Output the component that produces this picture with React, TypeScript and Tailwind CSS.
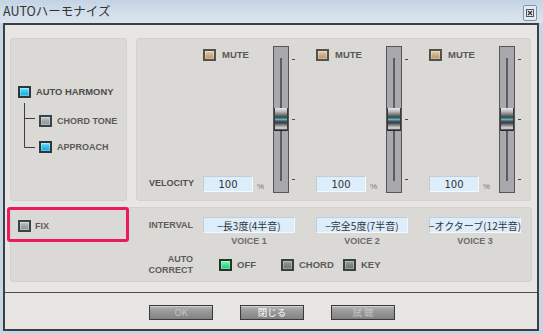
import React from 'react';

type Tone = 'cyan' | 'gray' | 'tan' | 'green' | 'dark';

const toneClass: Record<Tone, string> = {
  cyan: 'border-[#2e363c] bg-[linear-gradient(180deg,#7fe6ff_0%,#32c3ee_45%,#1aa8dc_100%)]',
  gray: 'border-[#3c4246] bg-[linear-gradient(180deg,#c4ccd0_0%,#9aa5aa_50%,#8e989d_100%)]',
  tan: 'border-[#55504a] bg-[linear-gradient(180deg,#e6cfae_0%,#c9aa86_55%,#b89872_100%)]',
  green: 'border-[#23352b] bg-[linear-gradient(180deg,#8cf5c0_0%,#3ee38f_50%,#22c877_100%)]',
  dark: 'border-[#3a403c] bg-[linear-gradient(180deg,#99a29d_0%,#7b8680_55%,#6c7670_100%)]',
};

const Check = ({ tone }: { tone: Tone }) => (
  <span
    className={`inline-block shrink-0 w-[13px] h-[12px] border-2 ${toneClass[tone]} shadow-[inset_0_0_0_1px_rgba(255,255,255,0.3)]`}
  />
);

const Slider = () => (
  <div className="flex items-start">
    <div className="relative w-[16px] h-[147px] border border-[#55555a] bg-[#a9a8ac]">
      <div className="absolute left-[6px] top-[11px] w-[2px] h-[123px] bg-[#5c5c61]" />
      {/* thumb sits on top of the track */}
      <div className="absolute left-0 right-0 top-[61px] h-[23px] border-x border-[#3a3a3a] bg-[linear-gradient(180deg,#e8e8e8_0%,#bdbdbd_15%,#7a7c7e_28%,#3d4446_40%,#52b9c2_50%,#5d5166_57%,#3b3d3f_64%,#8e8e8e_76%,#dedede_88%,#262626_96%)]" />
    </div>
    <div className="ml-[3px] flex flex-col gap-[59px] pt-[13px]">
      <span className="block w-[3px] h-[1px] bg-[#4a4a4a]" />
      <span className="block w-[3px] h-[1px] bg-[#4a4a4a]" />
      <span className="block w-[3px] h-[1px] bg-[#4a4a4a]" />
    </div>
  </div>
);

const VoiceColumn = () => (
  <div className="flex h-full">
    <div className="w-[70px] flex flex-col justify-between">
      <div className="flex items-center gap-[6px] mt-[3px]">
        <Check tone="tan" />
        <span className="text-[9.5px] font-bold text-[#585858] leading-none">MUTE</span>
      </div>
      <div className="flex items-end mb-[1px]">
        <div className="w-[50px] h-[16px] bg-[#dcedfb] border border-[#f4f8fc] border-t-[#c4ccd4] border-l-[#c4ccd4] flex items-center justify-center font-['DejaVu_Sans',sans-serif] text-[10px] text-[#333]">
          100
        </div>
        <span className="ml-[4px] text-[8px] text-[#777] leading-none mb-[1px]">%</span>
      </div>
    </div>
    <Slider />
  </div>
);

const intervals = ['−長3度(4半音)', '−完全5度(7半音)', '−オクターブ(12半音)'];

export default function App() {
  return (
    <div className="w-[543px] h-[334px] bg-[#c8d5e2] font-['Liberation_Sans',Arial,sans-serif] overflow-hidden">
      {/* title bar */}
      <div className="h-[23px] flex items-center justify-between pl-[3px] pr-[6px] bg-[linear-gradient(180deg,#c4d4e5_0%,#d3dfeb_60%,#dbe4ee_100%)]">
        <span className="font-['Noto_Sans_CJK_JP',sans-serif] text-[12.5px] text-[#333] leading-none">AUTOハーモナイズ</span>
        <div className="mt-[3px] w-[14px] h-[16px] rounded-[2px] border border-[#8393a6] bg-[#e4ebf3] flex items-center justify-center">
          <svg width="8" height="8" viewBox="0 0 8 8">
            <rect x="0.5" y="0.5" width="7" height="7" fill="none" stroke="#555" />
            <path d="M2 2L6 6M6 2L2 6" stroke="#333" strokeWidth="1.2" />
          </svg>
        </div>
      </div>

      {/* client area */}
      <div className="ml-[3px] w-[536px] h-[308px] border-2 border-[#3b4047] bg-[#e7e6e2]">
        <div className="h-[268px] border-b border-[#4d4d4d] px-[5px] pt-[13px]">
          <div className="flex gap-[9px]">
            {/* harmony mode panel */}
            <div className="w-[117px] h-[163px] rounded-[4px] bg-[#dad9d5] shadow-[inset_0_0_0_1px_#d2d1cd] pt-[48px] pl-[8px]">
              <div className="flex items-center gap-[5px] h-[12px]">
                <Check tone="cyan" />
                <span className="text-[9.4px] font-bold text-[#4c4c4c] leading-none">AUTO HARMONY</span>
              </div>
              <div className="flex mt-[5px]">
                <svg width="21" height="46" className="shrink-0">
                  <path d="M6.5 0V44.5H17M6.5 15.5H17" fill="none" stroke="#3d3d3d" />
                </svg>
                <div className="flex flex-col gap-[14px] pt-[12px]">
                  <div className="flex items-center gap-[5px] h-[12px]">
                    <Check tone="gray" />
                    <span className="text-[9px] font-bold text-[#5a5a5a] leading-none">CHORD TONE</span>
                  </div>
                  <div className="flex items-center gap-[5px] h-[12px]">
                    <Check tone="cyan" />
                    <span className="text-[9px] font-bold text-[#5a5a5a] leading-none">APPROACH</span>
                  </div>
                </div>
              </div>
            </div>

            {/* voices panel */}
            <div className="w-[395px] h-[163px] rounded-[4px] bg-[#dad9d5] shadow-[inset_0_0_0_1px_#d2d1cd] flex pt-[8px] pb-[8px]">
              <div className="w-[67px] flex flex-col justify-end pl-[13px]">
                <div className="h-[16px] mb-[1px] flex items-center text-[9px] font-bold text-[#505050]">VELOCITY</div>
              </div>
              <div className="flex gap-[21px]">
                <VoiceColumn />
                <VoiceColumn />
                <VoiceColumn />
              </div>
            </div>
          </div>

          {/* interval panel */}
          <div className="relative mt-[6px] h-[75px] rounded-[4px] bg-[#dad9d5] shadow-[inset_0_0_0_1px_#d2d1cd] pt-[10px]">
            <div className="flex items-center h-[16px]">
              <div className="w-[183px] flex items-center justify-between pl-[8px]">
                <div className="flex items-center gap-[4px] mt-[2px]">
                  <Check tone="gray" />
                  <span className="text-[9px] font-bold text-[#5a5a5a] leading-none">FIX</span>
                </div>
                <span className="text-[9px] font-bold text-[#5e5e5e] leading-none">INTERVAL</span>
              </div>
              <div className="ml-[10px] flex gap-[21px]">
                {intervals.map((t) => (
                  <div
                    key={t}
                    className="w-[92px] h-[16px] bg-[#dcedfb] border border-[#f4f8fc] border-t-[#c4ccd4] border-l-[#c4ccd4] flex items-center justify-center font-['Noto_Sans_CJK_JP',sans-serif] text-[10px] text-[#333] whitespace-nowrap"
                  >
                    {t}
                  </div>
                ))}
              </div>
            </div>
            <div className="flex ml-[193px] gap-[21px] mt-[2px] h-[12px] items-center">
              {['VOICE 1', 'VOICE 2', 'VOICE 3'].map((v) => (
                <span key={v} className="w-[92px] text-center text-[9px] font-bold text-[#6c6c6c] leading-none">
                  {v}
                </span>
              ))}
            </div>
            <div className="flex items-center h-[24px] mt-[6px]">
              <div className="w-[183px] text-right text-[9px] font-bold text-[#5c5c5c] leading-[11px]">
                AUTO
                <br />
                CORRECT
              </div>
              <div className="ml-[26px] flex">
                <div className="w-[62px] flex items-center gap-[5px]">
                  <Check tone="green" />
                  <span className="text-[9.5px] font-bold text-[#5a5a5a] leading-none">OFF</span>
                </div>
                <div className="w-[62px] flex items-center gap-[5px]">
                  <Check tone="dark" />
                  <span className="text-[9.5px] font-bold text-[#5a5a5a] leading-none">CHORD</span>
                </div>
                <div className="w-[62px] flex items-center gap-[5px]">
                  <Check tone="dark" />
                  <span className="text-[9.5px] font-bold text-[#5a5a5a] leading-none">KEY</span>
                </div>
              </div>
            </div>
            {/* highlight annotation over FIX */}
            <div className="absolute left-[-3px] top-0 w-[122px] h-[35px] border-[3px] border-[#eb1a5c] rounded-[3px]" />
          </div>
        </div>

        {/* buttons */}
        <div className="flex justify-center gap-[27px] pt-[12px] pl-[2px]">
          {[
            { t: 'OK', c: 'text-[#c6c6c6]' },
            { t: '閉じる', c: 'text-white' },
            { t: '試 聴', c: 'text-[#c6c6c6]' },
          ].map((b) => (
            <div
              key={b.t}
              className={`w-[64px] h-[15px] border border-[#3a3a3a] bg-[linear-gradient(180deg,#b4b4b4_0%,#979797_45%,#838383_100%)] shadow-[inset_0_1px_0_#cfcfcf] flex items-center justify-center font-['Noto_Sans_CJK_JP',sans-serif] text-[9.5px] leading-none ${b.c}`}
            >
              {b.t}
            </div>
          ))}
        </div>
      </div>
    </div>
  );
}
